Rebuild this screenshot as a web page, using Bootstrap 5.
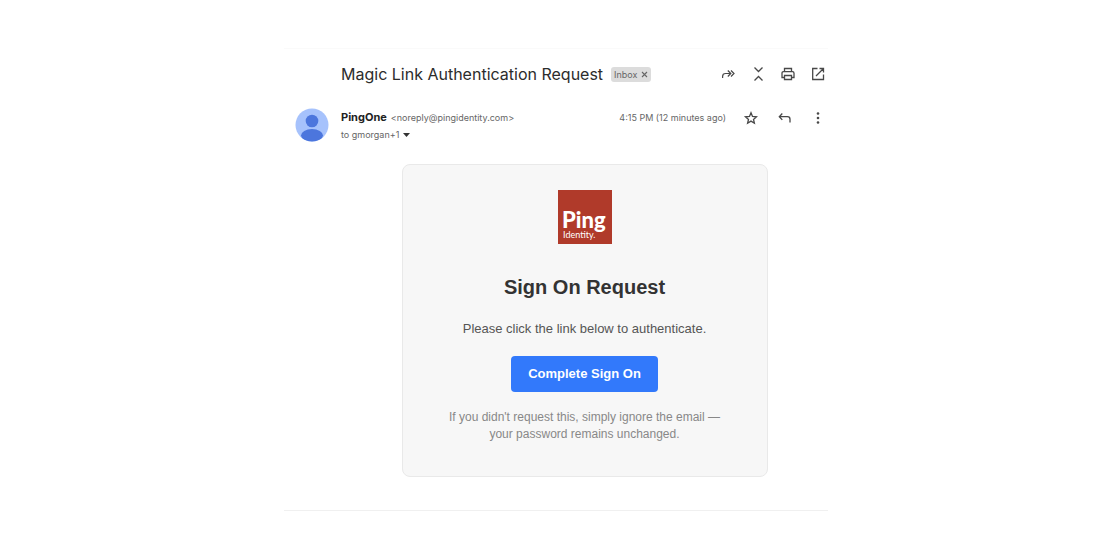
<!DOCTYPE html>
<html lang="en">
<head>
<meta charset="utf-8">
<meta name="viewport" content="width=device-width, initial-scale=1">
<title>Magic Link Authentication Request</title>
<link href="https://cdn.jsdelivr.net/npm/bootstrap@5.3.0/dist/css/bootstrap.min.css" rel="stylesheet">
<style>
  body { font-family: Inter, Roboto, sans-serif; color: #666; background: #fff; }
  .page { padding: 48px 8px 0 0; }
  .mail { max-width: 544px; border-top: 1px solid #fafafa; border-bottom: 1px solid #f0f0f0; padding-bottom: 33px; }
  .gutter { width: 57px; flex: none; padding-left: 11px; }
  .subject { font-size: 16px; line-height: 24px; color: #2c2c2c; }
  .subject-row { padding-top: 13px; }
  .label-chip { background: #dcdcdc; color: #666; font-size: 9px; line-height: 15px; border-radius: 3px; padding: 0 3px; }
  .label-chip button { color: inherit; }
  .tool { border: 0; background: none; padding: 0; width: 16px; height: 16px; color: #484848; display: flex; flex: none; }
  .tool svg { width: 16px; height: 16px; }
  .tools { gap: 14px; padding-right: 2px; }
  .sender-row { margin-top: 22px; }
  .sender-text { padding-top: 1px; }
  .sender { font-size: 11px; line-height: 17px; color: #222; }
  .meta { font-size: 9px; line-height: 17px; }
  .request { max-width: 366px; background: #f7f7f7; border: 1px solid #e9e9e9; border-radius: 8px; font-family: "Liberation Sans", Arial, sans-serif; margin-top: 21px; padding: 25px 44px 33px; }
  .logo { width: 54px; height: 54px; }
  .request h2 { font-size: 20px; line-height: 24px; color: #333; margin: 31px 0 20px; }
  .lead-in { font-size: 13px; line-height: 20px; color: #555; margin-bottom: 17px; }
  .btn-sign { --bs-btn-bg: #3279fb; --bs-btn-color: #fff; --bs-btn-hover-bg: #1f68ec; --bs-btn-hover-color: #fff; --bs-btn-border-radius: 4px; --bs-btn-border-width: 0; --bs-btn-padding-x: 17px; --bs-btn-padding-y: 9px; --bs-btn-font-size: 13px; --bs-btn-line-height: 18px; --bs-btn-font-weight: 700; --bs-btn-font-family: "Liberation Sans", Arial, sans-serif; }
  .note { font-size: 12px; line-height: 17px; color: #888; margin: 17px 0 0; }
</style>
</head>
<body>
<div class="page">
<main class="mail mx-auto">
  <header class="subject-row d-flex align-items-center">
    <div class="gutter"></div>
    <h1 class="subject fw-normal mb-0 me-2 text-nowrap">Magic Link Authentication Request</h1>
    <span class="label-chip d-flex gap-1 text-nowrap">Inbox <button class="border-0 bg-transparent p-0 d-flex align-items-center" aria-label="Remove label"><svg width="7" height="7" viewBox="0 0 7 7" stroke="currentColor" stroke-width="1.1"><path d="M1 1L6 6M6 1L1 6"/></svg></button></span>
    <div class="tools d-flex ms-auto">
      <button class="tool" aria-label="Forward all"><svg viewBox="0 0 16 16" fill="none" stroke="currentColor" stroke-width="1.2"><path d="M2.600 12V10.500Q2.600 7.500 5.600 7.500H10.500M7.800 4.500L10.800 7.500L7.800 10.500M11 4.500L14 7.500L11 10.500"/></svg></button>
      <button class="tool" aria-label="Collapse all"><svg viewBox="0 0 16 16" fill="none" stroke="currentColor" stroke-width="1.300"><path d="M4.500 1.500L8.500 5.500L12.500 1.500M4.500 14.500L8.500 10.500L12.500 14.500"/></svg></button>
      <button class="tool" aria-label="Print all"><svg viewBox="0 0 16 16" fill="none" stroke="currentColor" stroke-width="1.3"><path d="M4.500 5.500V2.500H11.500V5.500M4.500 11.500H2V7.200Q2 5.700 3.500 5.700H12.500Q14 5.700 14 7.200V11.500H11.500M4.500 9.500H11.500V13.500H4.500Z"/></svg></button>
      <button class="tool" aria-label="Open in new window"><svg viewBox="0 0 16 16" fill="none" stroke="currentColor" stroke-width="1.3"><path d="M7.500 2.500H2.700V13.500H13.500V8.500M9.500 2.500H13.500V6.500M13.500 2.500L6 10"/></svg></button>
    </div>
  </header>

  <div class="sender-row d-flex">
    <div class="gutter"><svg class="d-block" width="34" height="34" viewBox="0 0 34 34" role="img" aria-label="PingOne"><defs><clipPath id="disc"><circle cx="17" cy="17" r="16.500"/></clipPath></defs><circle cx="17" cy="17" r="16.500" fill="#a6c2fc"/><circle cx="17" cy="13" r="6.300" fill="#4c76dd"/><ellipse cx="17" cy="27.500" rx="11" ry="6.500" fill="#4c76dd" clip-path="url(#disc)"/></svg></div>
    <div class="sender-text flex-grow-1">
      <div class="d-flex align-items-center">
        <span class="sender fw-bold me-1">PingOne</span>
        <span class="meta">&lt;noreply@pingidentity.com&gt;</span>
        <span class="meta ms-auto me-3">4:15 PM (12 minutes ago)</span>
        <div class="tools d-flex">
          <button class="tool me-1" aria-label="Star"><svg viewBox="0 0 16 16" fill="none" stroke="currentColor" stroke-width="1.3"><path d="M9 2.800L10.500 6.500L14.500 6.800L11.500 9.400L12.400 13.200L9 11.100L5.600 13.200L6.500 9.400L3.500 6.800L7.500 6.500Z"/></svg></button>
          <button class="tool me-1" aria-label="Reply"><svg viewBox="0 0 16 16" fill="none" stroke="currentColor" stroke-width="1.3"><path d="M6.300 3.500L3.300 6.700L6.300 9.900M3.300 6.700H11.500Q14 6.700 14 9.200V12.500"/></svg></button>
          <button class="tool" aria-label="More"><svg viewBox="0 0 16 16" fill="currentColor"><circle cx="8" cy="3.500" r="1.300"/><circle cx="8" cy="8" r="1.300"/><circle cx="8" cy="12.500" r="1.300"/></svg></button>
        </div>
      </div>
      <div class="meta d-flex align-items-center gap-1">to gmorgan+1 <button class="border-0 bg-transparent p-0 d-flex" aria-label="Show details"><svg width="7" height="4" viewBox="0 0 7 4"><path d="M0 0H7L3.500 4Z" fill="#333"/></svg></button></div>
    </div>
  </div>

  <div class="d-flex">
    <div class="gutter"></div>
    <div class="flex-grow-1">
      <section class="request mx-auto text-center">
        <svg class="logo d-block mx-auto" viewBox="0 0 54 54" role="img" aria-label="Ping Identity"><rect width="54" height="54" fill="#b03a2a"/><text x="4" y="38" font-family="Lato, sans-serif" font-weight="900" font-size="22" fill="#fff">Ping</text><text x="5" y="48" font-family="Lato, sans-serif" font-size="9" fill="#fff">Identity.</text></svg>
        <h2 class="fw-bold">Sign On Request</h2>
        <p class="lead-in">Please click the link below to authenticate.</p>
        <button class="btn btn-sign">Complete Sign On</button>
        <p class="note">If you didn't request this, simply ignore the email —<br>your password remains unchanged.</p>
      </section>
    </div>
  </div>
</main>
</div>
<script src="https://cdn.jsdelivr.net/npm/bootstrap@5.3.0/dist/js/bootstrap.bundle.min.js"></script>
</body>
</html>
